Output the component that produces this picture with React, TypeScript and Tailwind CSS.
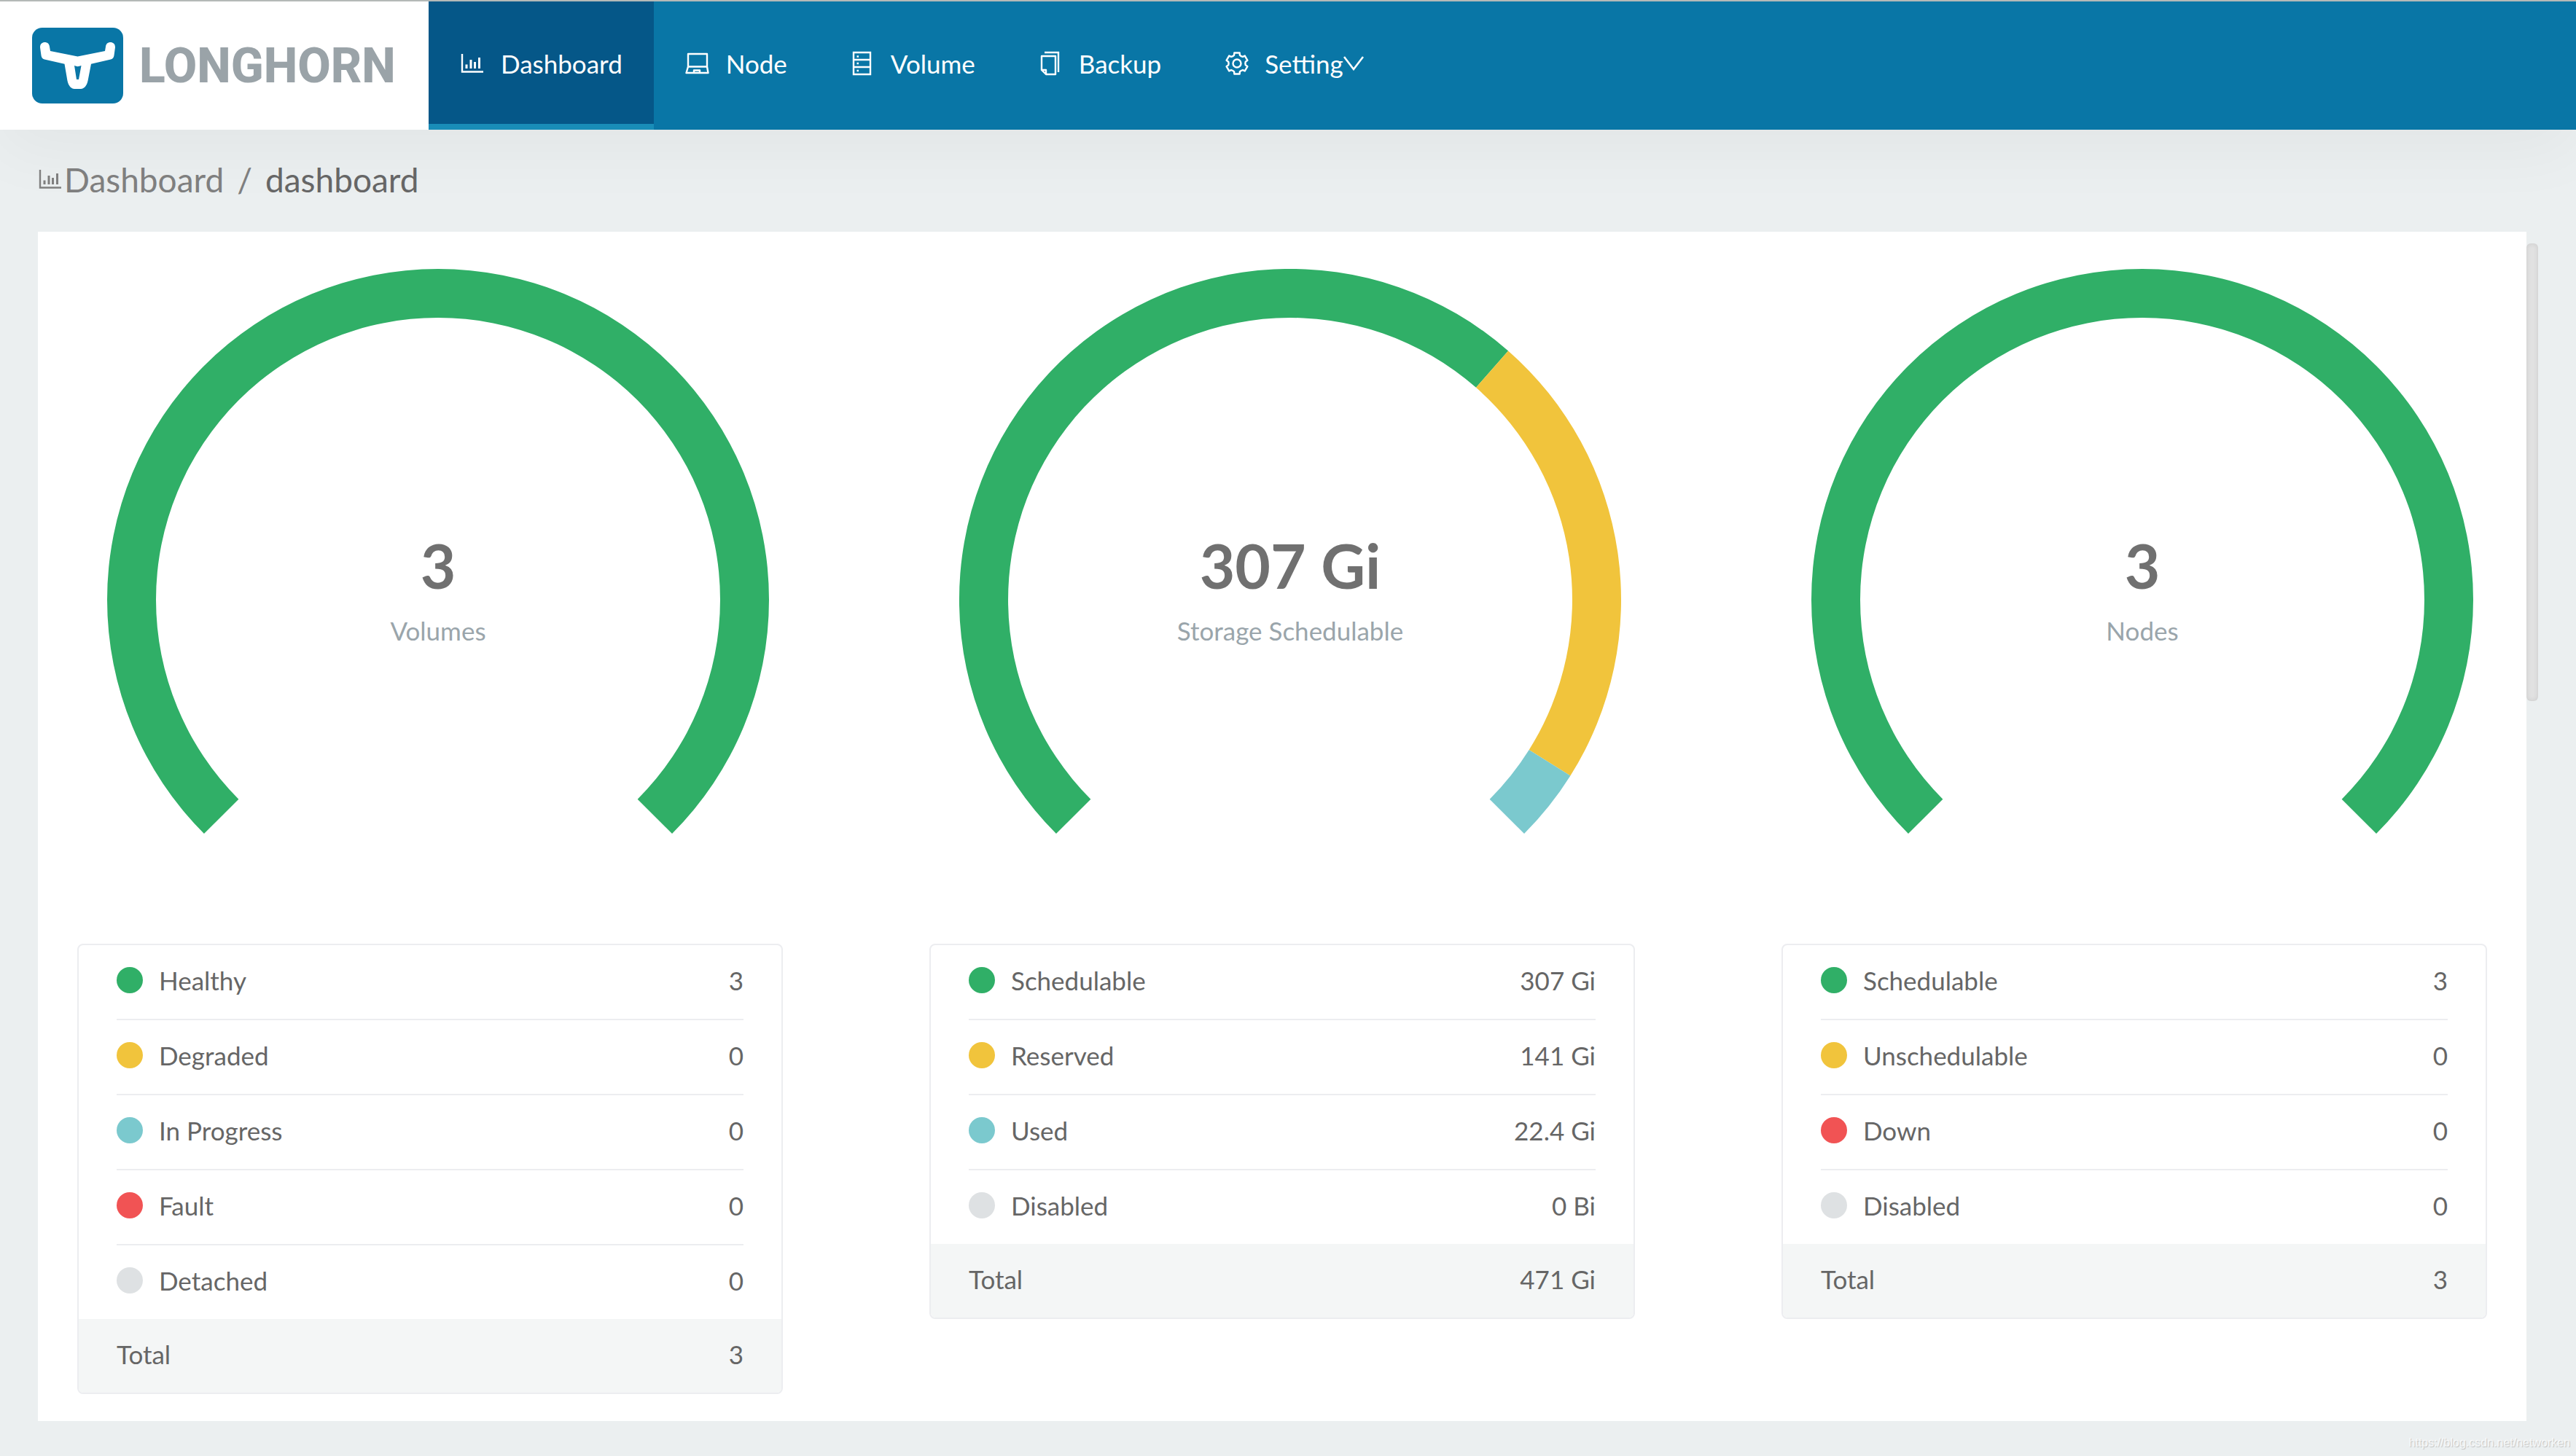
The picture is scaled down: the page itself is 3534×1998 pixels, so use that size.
import type { ReactNode } from "react";
import clsx from "clsx";

type Item = { name: string; value: string; amount: number; color: string; dot: string };
type Resource = { label: string; headline: string; total: string; items: Item[] };

const GREEN = { color: "#30af67", dot: "bg-[#30af67]" };
const YELLOW = { color: "#f1c43c", dot: "bg-[#f1c43c]" };
const TEAL = { color: "#7bc9ce", dot: "bg-[#7bc9ce]" };
const RED = { color: "#f15354", dot: "bg-[#f15354]" };
const GREY = { color: "#dee1e3", dot: "bg-[#dee1e3]" };

const resources: Resource[] = [
  {
    label: "Volumes",
    headline: "3",
    total: "3",
    items: [
      { name: "Healthy", value: "3", amount: 3, ...GREEN },
      { name: "Degraded", value: "0", amount: 0, ...YELLOW },
      { name: "In Progress", value: "0", amount: 0, ...TEAL },
      { name: "Fault", value: "0", amount: 0, ...RED },
      { name: "Detached", value: "0", amount: 0, ...GREY },
    ],
  },
  {
    label: "Storage Schedulable",
    headline: "307 Gi",
    total: "471 Gi",
    items: [
      { name: "Schedulable", value: "307 Gi", amount: 307, ...GREEN },
      { name: "Reserved", value: "141 Gi", amount: 141, ...YELLOW },
      { name: "Used", value: "22.4 Gi", amount: 22.4, ...TEAL },
      { name: "Disabled", value: "0 Bi", amount: 0, ...GREY },
    ],
  },
  {
    label: "Nodes",
    headline: "3",
    total: "3",
    items: [
      { name: "Schedulable", value: "3", amount: 3, ...GREEN },
      { name: "Unschedulable", value: "0", amount: 0, ...YELLOW },
      { name: "Down", value: "0", amount: 0, ...RED },
      { name: "Disabled", value: "0", amount: 0, ...GREY },
    ],
  },
];

// angle is in degrees, clockwise from 12 o'clock
const polar = (cx: number, cy: number, r: number, angle: number) => {
  const rad = ((angle - 90) * Math.PI) / 180;
  return `${(cx + r * Math.cos(rad)).toFixed(2)} ${(cy + r * Math.sin(rad)).toFixed(2)}`;
};

const arcPath = (start: number, end: number) => {
  const large = end - start > 180 ? 1 : 0;
  return [
    `M${polar(495, 454, 454, start)}`,
    `A454 454 0 ${large} 1 ${polar(495, 454, 454, end)}`,
    `L${polar(495, 454, 387, end)}`,
    `A387 387 0 ${large} 0 ${polar(495, 454, 387, start)}`,
    "Z",
  ].join(" ");
};

const gearPath =
  [0, 60, 120, 180, 240, 300]
    .map(
      (a, i) =>
        `${i ? "L" : "M"}${polar(18, 18, 15, a - 14)} L${polar(18, 18, 15, a + 14)} L${polar(18, 18, 12, a + 19)} Q${polar(18, 18, 11, a + 30)} ${polar(18, 18, 12, a + 41)}`
    )
    .join(" ") + " Z";

const Icon = ({ children }: { children: ReactNode }) => (
  <svg viewBox="0 0 36 36" className="size-9 shrink-0" fill="none" stroke="currentColor" strokeWidth="2.4" strokeLinejoin="round" aria-hidden="true">
    {children}
  </svg>
);

const ChartIcon = () => (
  <Icon>
    <path d="M3 5V29.5H32" strokeLinejoin="miter" />
    <path d="M9 19.500V25M15 13V25M20.500 16V25M26.500 10V25" strokeWidth="3" />
  </Icon>
);

const LaptopIcon = () => (
  <Icon>
    <path d="M4 5H30V22.500H4Z M4 22.500L1.500 31H31.500L30 22.500 M12 31V27.500H20V31" />
  </Icon>
);

const DatabaseIcon = () => (
  <Icon>
    <path d="M5 3H28V33H5Z M5 13H28M5 23H28" strokeLinejoin="miter" />
    <path d="M9.500 8.500H12M9.500 18H12M9.500 28H12" strokeWidth="2.5" />
  </Icon>
);

const CopyIcon = () => (
  <Icon>
    <path d="M5 8H24V33H11L5 27Z M5 27H11V33" />
    <path d="M9 3H28V30" strokeLinejoin="miter" />
  </Icon>
);

const GearIcon = () => (
  <Icon>
    <path d={gearPath} />
    <circle cx="18" cy="18" r="5.500" />
  </Icon>
);

const navItems = [
  { name: "Dashboard", icon: <ChartIcon /> },
  { name: "Node", icon: <LaptopIcon /> },
  { name: "Volume", icon: <DatabaseIcon /> },
  { name: "Backup", icon: <CopyIcon /> },
];

const Logo = () => (
  <a href="#" className="flex w-[588px] shrink-0 items-center gap-[22px] bg-white pl-11">
    <svg viewBox="0 0 125 104" className="h-[104px] w-[125px]" aria-hidden="true">
      <rect width="125" height="104" rx="14" fill="#0976a6" />
      <path
        fill="#fff"
        fillRule="evenodd"
        d="M11 27C11 22 14 20 17.500 20C21 20 23.500 22 24 26L25 32L62.500 39.500L100 32L101 26C101.500 22 104 20 107.500 20C111 20 114 22 114 27L112.500 38C112 41 111 42.500 108 43.500L81 49.700L76.500 73C75 80 71 84 67 84H58C54 84 50 80 48.500 73L44.500 49.700L17 43.500C14 42.500 13 41 12.500 38ZM58 52L61 71H64L67.500 52C64 53.500 61 53.500 58 52Z"
      />
    </svg>
    <span className="pt-0.5 font-[Roboto,sans-serif] text-[66px] leading-none font-extrabold text-[#9aa3a8]">LONGHORN</span>
  </a>
);

const Header = () => (
  <header className="relative flex h-[178px] border-t-2 border-[#b4b9b7] bg-[#0976a6] shadow-[0_30px_90px_rgba(0,0,0,0.04)]">
    <Logo />
    <nav className="flex text-[35px] text-white">
      {navItems.map((item, index) => (
        <a
          key={item.name}
          href="#"
          className={clsx(
            "flex items-center gap-5 border-b-8 px-[43px] pt-0.5",
            index === 0 ? "border-[#198db8] bg-[#055788]" : "border-transparent"
          )}
        >
          {item.icon}
          {item.name}
        </a>
      ))}
      <button type="button" className="flex items-center gap-5 border-b-8 border-transparent px-[43px] pt-0.5">
        <GearIcon />
        <span className="flex items-center">
          Setting
          <svg viewBox="0 0 28 20" className="h-5 w-7" fill="none" stroke="currentColor" strokeWidth="2.6" aria-hidden="true">
            <path d="M1 1L14 18L27 1" />
          </svg>
        </span>
      </button>
    </nav>
  </header>
);

const Gauge = ({ resource }: { resource: Resource }) => {
  const sum = resource.items.reduce((acc, item) => acc + item.amount, 0);
  let angle = -135;

  return (
    <svg viewBox="0 0 990 776" className="w-full" role="img" aria-label={resource.label}>
      {resource.items
        .filter((item) => item.amount > 0)
        .map((item) => {
          const start = angle;
          angle += (item.amount / sum) * 270;
          return <path key={item.name} d={arcPath(start, angle)} fill={item.color} />;
        })}
      <text x="495" y="439" textAnchor="middle" className="fill-[#707070] text-[84px] font-bold">
        {resource.headline}
      </text>
      <text x="495" y="510" textAnchor="middle" className="fill-[#9aa5ab] text-[35px]">
        {resource.label}
      </text>
    </svg>
  );
};

const SummaryTable = ({ resource }: { resource: Resource }) => (
  <div className="mt-[150px] mr-[22px] overflow-hidden rounded-lg border-2 border-[#ecedf0]">
    <table className="w-full text-[35px] leading-[44px] text-[#666]">
      <tbody>
        {resource.items.map((item, index) => {
          const line = index < resource.items.length - 1 && "border-b-2 border-[#ecedf0]";
          return (
            <tr key={item.name}>
              <th scope="row" className="p-0 pl-[52px] text-left font-normal">
                <div className={clsx("flex items-center gap-[22px] pt-[26px] pb-[31px]", line)}>
                  <span className={clsx("size-9 rounded-full", item.dot)} />
                  {item.name}
                </div>
              </th>
              <td className="p-0 pr-[52px] text-right">
                <div className={clsx("pt-[26px] pb-[31px]", line)}>{item.value}</div>
              </td>
            </tr>
          );
        })}
      </tbody>
      <tfoot className="bg-[#f4f6f6]">
        <tr>
          <th scope="row" className="pt-[26px] pb-[31px] pl-[52px] text-left font-normal">Total</th>
          <td className="pt-[26px] pr-[52px] pb-[31px] text-right">{resource.total}</td>
        </tr>
      </tfoot>
    </table>
  </div>
);

const App = () => {
  return (
    <div className="relative flex min-h-screen flex-col bg-[#ebeff0] font-[Lato,sans-serif]">
      <Header />
      <div className="relative flex h-[140px] items-center px-[52px] pb-1 text-[46px] text-[#7f7f7f]">
        <a href="#" className="flex items-center">
          <ChartIcon />
          Dashboard
        </a>
        <span className="px-[18px]">/</span>
        <span className="text-[#666]">dashboard</span>
      </div>
      <main className="relative flex flex-1 px-[52px] pb-12">
        <div className="grid flex-1 grid-cols-3 gap-[179px] bg-white pt-[51px] pr-8 pl-[54px]">
          {resources.map((resource) => (
            <section key={resource.label}>
              <Gauge resource={resource} />
              <SummaryTable resource={resource} />
            </section>
          ))}
        </div>
        <div className="mt-4 h-[628px] w-4 rounded-md bg-[#e1e1e1] shadow-[inset_0_0_6px_rgba(0,0,0,0.1)]" />
      </main>
      <span className="absolute right-2 bottom-2 font-['Liberation_Sans',sans-serif] text-base leading-5 text-white/80 [text-shadow:1px_1px_1px_rgba(0,0,0,0.2)]">
        https://blog.csdn.net/networken
      </span>
    </div>
  );
};

export default App;
